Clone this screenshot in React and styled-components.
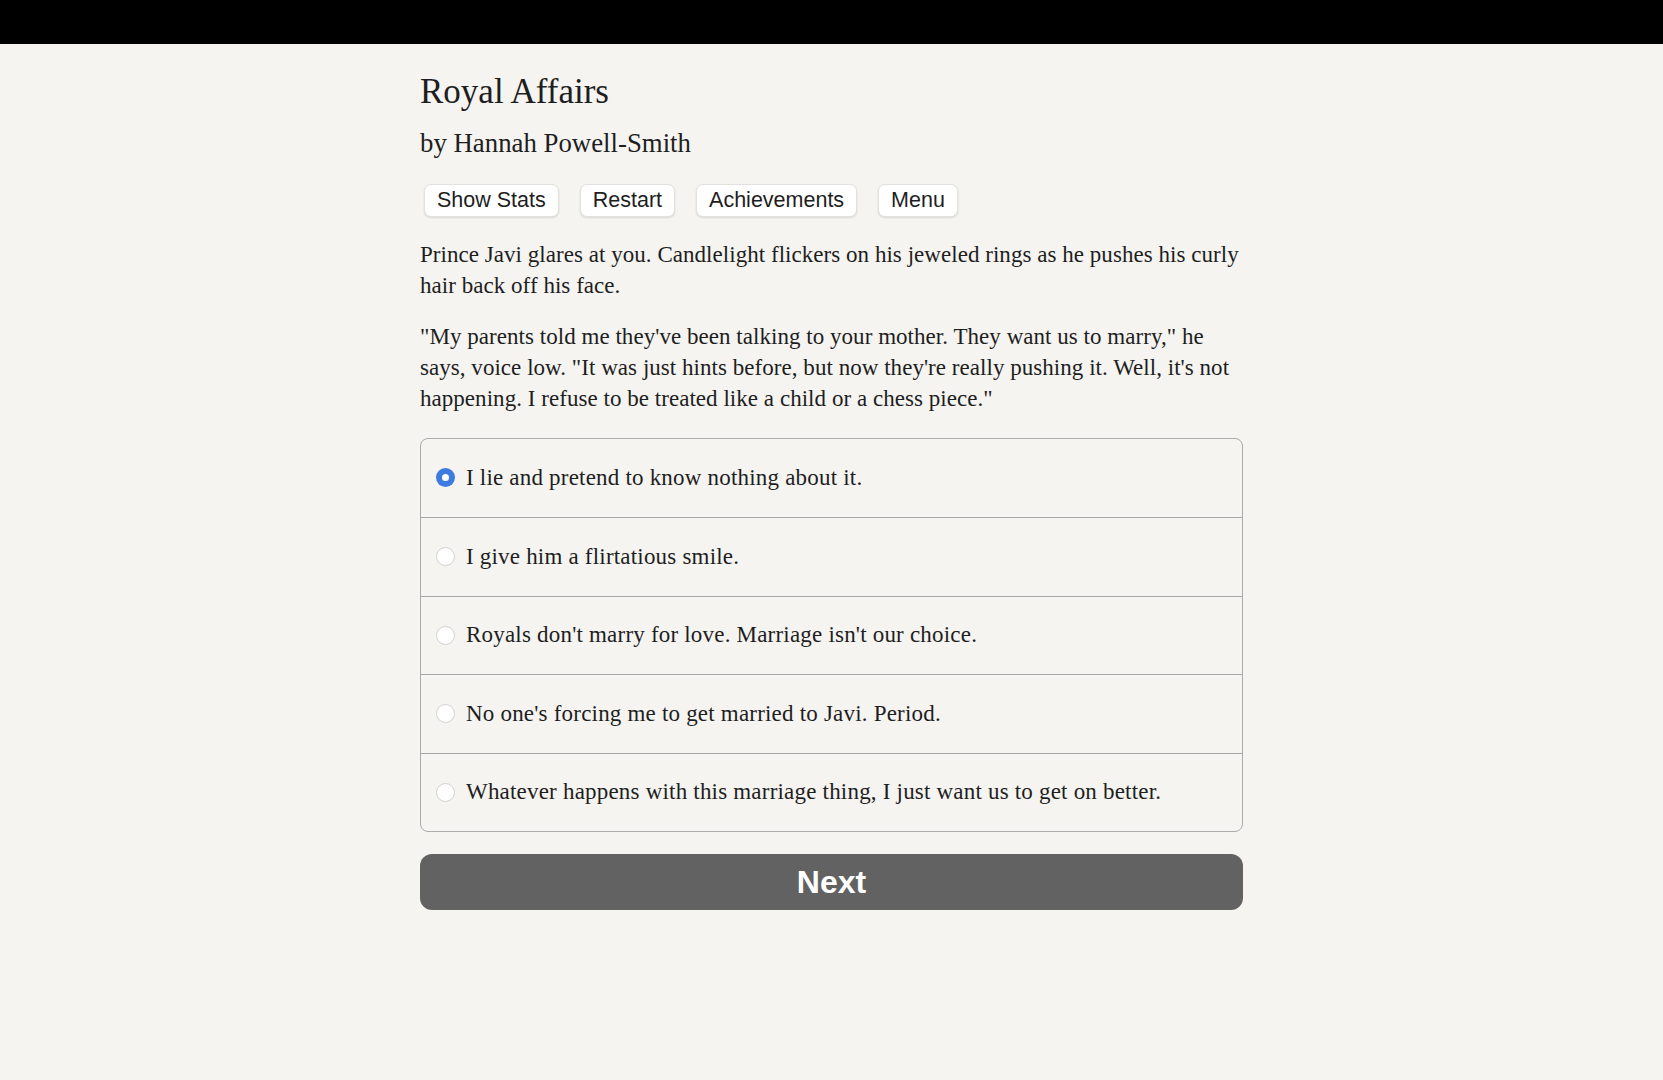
import React, { useState } from "react";
import styled, { createGlobalStyle } from "styled-components";

const GlobalStyle = createGlobalStyle`
  html, body {
    margin: 0;
    padding: 0;
    background: #f5f4f1;
  }
  body {
    min-height: 1080px;
  }
`;

const TopBar = styled("div")`
  height: 44px;
  background: #000;
`;

const Page = styled("div")`
  width: 823px;
  margin: 0 auto;
  padding-top: 28px;
  font-family: "Liberation Serif", "Times New Roman", serif;
  color: #1e1e1e;
`;

const Title = styled("h1")`
  margin: 0;
  font-size: 35px;
  line-height: 40px;
  font-weight: 400;
`;

const Author = styled("h2")`
  margin: 15px 0 0;
  font-size: 26.8px;
  line-height: 32px;
  font-weight: 400;
`;

const Toolbar = styled("div")`
  display: flex;
  gap: 21px;
  margin: 25px 0 0 4px;
`;

const ToolButton = styled("button")`
  height: 33px;
  padding: 0 12px;
  background: #fff;
  border: 1px solid #e2e1dd;
  border-radius: 7px;
  box-shadow: 0 1px 2px rgba(0, 0, 0, 0.12);
  font-family: "Liberation Sans", Arial, sans-serif;
  font-size: 21.5px;
  color: #1e1e1e;
  cursor: pointer;
`;

const Story = styled("div")`
  margin-top: 23px;
`;

const Para = styled("p")`
  margin: 0 0 21px;
  font-size: 23px;
  line-height: 30.7px;
  letter-spacing: 0.04px;
`;

const Choices = styled("div")`
  margin-top: 23px;
  border: 1px solid #ababab;
  border-radius: 8px;
  overflow: hidden;
`;

const Choice = styled("label")`
  display: flex;
  align-items: center;
  gap: 11px;
  height: 78.5px;
  padding-left: 15px;
  box-sizing: border-box;
  font-size: 23px;
  letter-spacing: 0.2px;
  cursor: pointer;
  & + & {
    border-top: 1px solid #a6a6a6;
  }
`;

const Radio = styled("span")`
  flex: none;
  width: 19px;
  height: 19px;
  border-radius: 50%;
  box-sizing: border-box;
  background: ${(p) => (p.$checked ? "#3d7be0" : "#fff")};
  border: ${(p) => (p.$checked ? "none" : "1px solid #d2d2d0")};
  display: flex;
  align-items: center;
  justify-content: center;
  &::after {
    content: "";
    display: ${(p) => (p.$checked ? "block" : "none")};
    width: 7px;
    height: 7px;
    border-radius: 50%;
    background: #fff;
  }
`;

const NextButton = styled("button")`
  display: block;
  width: 100%;
  height: 56px;
  margin-top: 22px;
  border: none;
  border-radius: 12px;
  background: #626262;
  color: #fff;
  font-family: "Liberation Sans", Arial, sans-serif;
  font-size: 32px;
  font-weight: 700;
  cursor: pointer;
`;

const options = [
  "I lie and pretend to know nothing about it.",
  "I give him a flirtatious smile.",
  "Royals don't marry for love. Marriage isn't our choice.",
  "No one's forcing me to get married to Javi. Period.",
  "Whatever happens with this marriage thing, I just want us to get on better.",
];

export default function App() {
  const [picked, setPicked] = useState(0);
  return (
    <>
      <GlobalStyle />
      <TopBar />
      <Page>
        <Title>Royal Affairs</Title>
        <Author>by Hannah Powell-Smith</Author>
        <Toolbar>
          <ToolButton>Show Stats</ToolButton>
          <ToolButton>Restart</ToolButton>
          <ToolButton>Achievements</ToolButton>
          <ToolButton>Menu</ToolButton>
        </Toolbar>
        <Story>
          <Para>
            Prince Javi glares at you. Candlelight flickers on his jeweled rings as he pushes his curly
            hair back off his face.
          </Para>
          <Para>
            "My parents told me they've been talking to your mother. They want us to marry," he
            says, voice low. "It was just hints before, but now they're really pushing it. Well, it's not
            happening. I refuse to be treated like a child or a chess piece."
          </Para>
        </Story>
        <Choices>
          {options.map((text, i) => (
            <Choice key={i} onClick={() => setPicked(i)}>
              <Radio $checked={picked === i} />
              {text}
            </Choice>
          ))}
        </Choices>
        <NextButton>Next</NextButton>
      </Page>
    </>
  );
}
